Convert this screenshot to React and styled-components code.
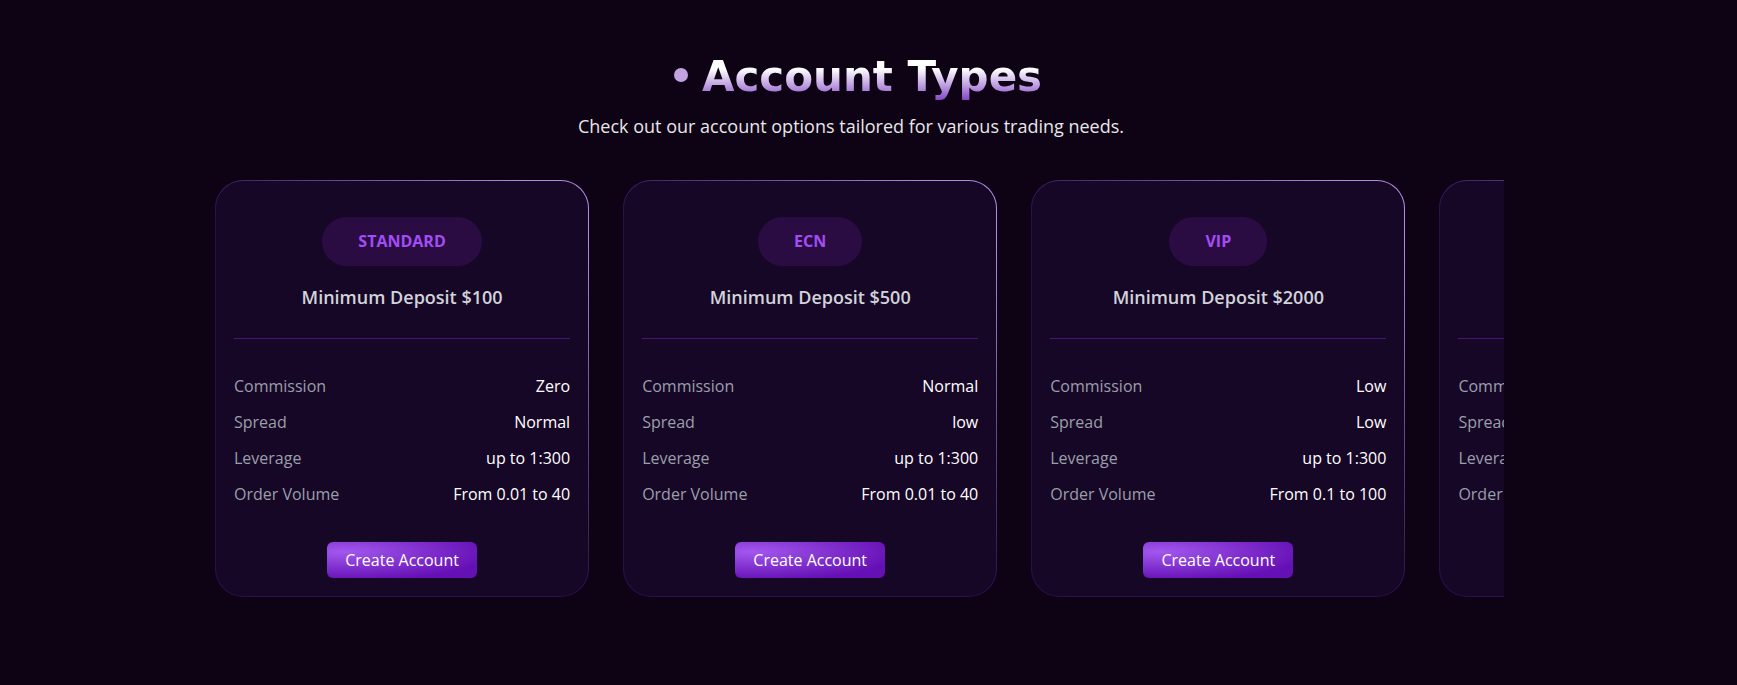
import React from "react";
import styled, { createGlobalStyle } from "styled-components";

const GlobalStyle = createGlobalStyle`
  *, *::before, *::after { box-sizing: border-box; }
  body {
    margin: 0;
    min-height: 100vh;
    background: #0d0314;
    color: #ffffff;
    font-family: "Open Sans", "Noto Sans", sans-serif;
    font-size: 16px;
    line-height: 24px;
  }
`;

const Section = styled.section`
  padding: 50px 233px 88px 198px;
`;

const Header = styled.header`
  display: flex;
  flex-direction: column;
  align-items: center;
  gap: 10px;
  text-align: center;
`;

const Heading = styled.h2`
  display: flex;
  align-items: center;
  gap: 14px;
  margin: 0;
  padding-left: 14px;
  font-family: "DejaVu Sans", sans-serif;
  font-size: 42px;
  font-weight: 700;
  line-height: 54px;
`;

const Bullet = styled.span`
  width: 14px;
  height: 14px;
  margin-bottom: 4px;
  border-radius: 50%;
  background: #c3a2e2;
`;

const HeadingText = styled.span`
  background: linear-gradient(180deg, #ffffff 35%, #8040c4 95%);
  background-clip: text;
  -webkit-background-clip: text;
  color: transparent;
`;

const Subtitle = styled.p`
  margin: 0;
  color: #e8e6ea;
  font-size: 18px;
  font-weight: 500;
`;

const Carousel = styled.div`
  display: flex;
  margin-top: 42px;
  overflow: hidden;
`;

const Slide = styled.div`
  display: flex;
  flex: 0 0 31.25%;
  padding: 0 17px;
`;

const Card = styled.article`
  display: flex;
  flex: 1;
  flex-direction: column;
  align-items: center;
  padding: 36px 18px 18px;
  border: 1px solid transparent;
  border-radius: 28px;
  background:
    linear-gradient(#170726, #170726) padding-box,
    linear-gradient(225deg, #b48ade 0%, #b48ade 8%, #2c0d4d 52%) border-box;
`;

const CardHeader = styled.div`
  display: flex;
  flex-direction: column;
  align-items: center;
  gap: 19px;
  width: 100%;
  height: 122px;
  border-bottom: 1px solid #4b1578;
`;

const Badge = styled.span`
  padding: 12px 36px 13px;
  border-radius: 25px;
  background: #2a0c43;
  color: #a24df5;
  font-weight: 700;
`;

const Deposit = styled.h3`
  margin: 0;
  color: #d1d3da;
  font-size: 18px;
  font-weight: 600;
`;

const Details = styled.dl`
  display: flex;
  flex-direction: column;
  gap: 12px;
  width: 100%;
  margin: 35px 0 36px;
`;

const Detail = styled.div`
  display: flex;
  justify-content: space-between;
`;

const Term = styled.dt`
  color: #9a9fab;
`;

const Value = styled.dd`
  margin: 0;
  font-weight: 500;
`;

const CreateButton = styled.button`
  padding: 6px 18px;
  border: 0;
  border-radius: 6px;
  background: radial-gradient(ellipse at 11% 27%, #a357ee 0%, #6510b5 78%);
  color: #ffffff;
  font: inherit;
  font-weight: 500;
  white-space: nowrap;
  cursor: pointer;
`;

const fields = ["Commission", "Spread", "Leverage", "Order Volume"];

const accounts = [
  { name: "STANDARD", deposit: "$100", values: ["Zero", "Normal", "up to 1:300", "From 0.01 to 40"] },
  { name: "ECN", deposit: "$500", values: ["Normal", "low", "up to 1:300", "From 0.01 to 40"] },
  { name: "VIP", deposit: "$2000", values: ["Low", "Low", "up to 1:300", "From 0.1 to 100"] },
  { values: [] },
];

function AccountCard({ name, deposit, values }) {
  return (
    <Card>
      <CardHeader>
        {name && <Badge>{name}</Badge>}
        {deposit && <Deposit>Minimum Deposit {deposit}</Deposit>}
      </CardHeader>
      <Details>
        {fields.map((field, i) => (
          <Detail key={field}>
            <Term>{field}</Term>
            <Value>{values[i]}</Value>
          </Detail>
        ))}
      </Details>
      <CreateButton type="button">Create Account</CreateButton>
    </Card>
  );
}

export default function App() {
  return (
    <>
      <GlobalStyle />
      <Section>
        <Header>
          <Heading>
            <Bullet aria-hidden="true" />
            <HeadingText>Account Types</HeadingText>
          </Heading>
          <Subtitle>Check out our account options tailored for various trading needs.</Subtitle>
        </Header>
        <Carousel>
          {accounts.map((account, i) => (
            <Slide key={i}>
              <AccountCard {...account} />
            </Slide>
          ))}
        </Carousel>
      </Section>
    </>
  );
}
